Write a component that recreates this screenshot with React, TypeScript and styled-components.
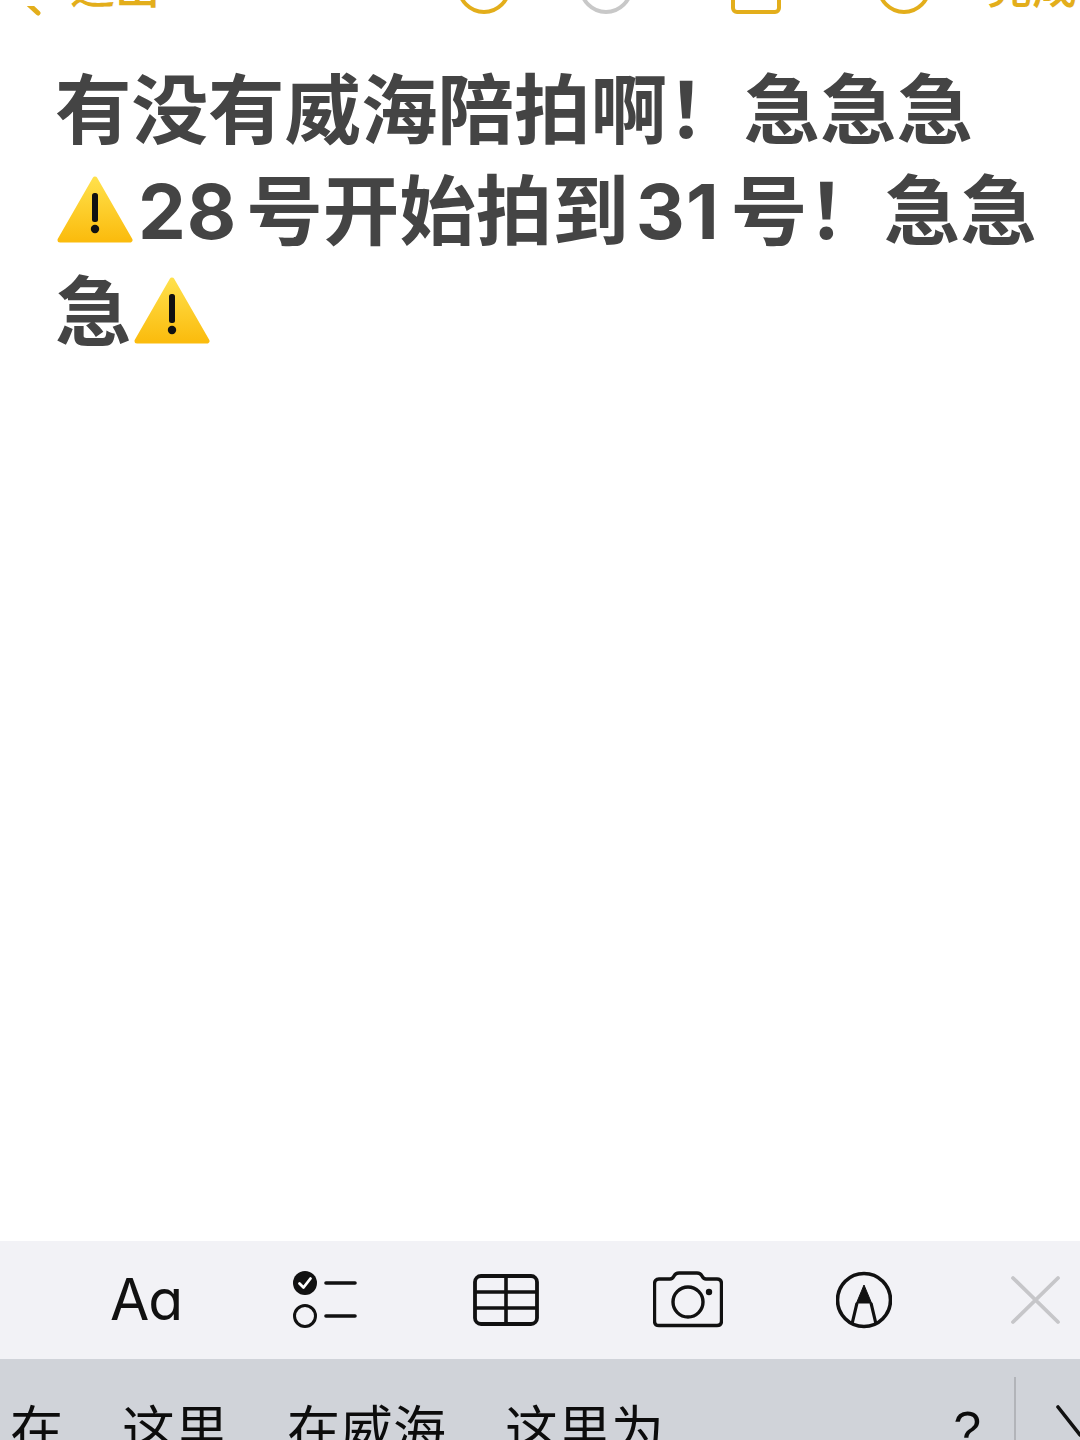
import React from 'react'
import styled, { createGlobalStyle } from 'styled-components'

const GlobalStyle = createGlobalStyle`
  html, body {
    margin: 0;
    padding: 0;
    background: #fff;
  }
`

const Screen = styled.div`
  width: 1080px;
  height: 1440px;
  display: flex;
  flex-direction: column;
  overflow: hidden;
  background: #fff;
  font-family: "Noto Sans CJK SC", "Noto Sans", sans-serif;
`

// the nav bar is cut off by the top of the screen, only its bottom edge shows
const NavBar = styled.div`
  height: 16px;
  flex: none;
  display: flex;
  align-items: flex-end;
  overflow: hidden;
  color: #e3ae1b;
`

const NavText = styled.span<{ $left: number; $drop: number }>`
  flex: none;
  margin-left: ${p => p.$left}px;
  margin-bottom: ${p => p.$drop}px;
  font-size: 45px;
  font-weight: 500;
  line-height: 45px;
  white-space: nowrap;
`

const NavSvg = styled.svg<{ $left: number }>`
  flex: none;
  display: block;
  margin-left: ${p => p.$left}px;
`

const NavCircle = styled.div<{ $left: number; $muted?: boolean }>`
  flex: none;
  box-sizing: border-box;
  width: 54px;
  height: 54px;
  margin-left: ${p => p.$left}px;
  margin-bottom: 2px;
  border: 4px solid ${p => (p.$muted ? '#c8c8c8' : '#e3ae1b')};
  border-radius: 50%;
`

const NavSquare = styled.div<{ $left: number }>`
  flex: none;
  box-sizing: border-box;
  width: 50px;
  height: 50px;
  margin-left: ${p => p.$left}px;
  margin-bottom: 2px;
  border: 4px solid #e3ae1b;
  border-radius: 6px;
`

const Note = styled.div`
  flex: 1;
  min-height: 0;
  padding: 38px 40px 0 55px;
  color: #444444;
  font-size: 76.5px;
  font-weight: 700;
  line-height: 101px;
`

const Digits = styled.span<{ $tail: number }>`
  margin: 0 ${p => p.$tail}px 0 7px;
  font-family: Inter, "Noto Sans", sans-serif;
  font-size: 76px;
  line-height: 1;
  letter-spacing: 1px;
`

const WarningSvg = styled.svg`
  display: inline-block;
  width: 76px;
  height: 68px;
  margin: -20px -2px -20px 2px;
  vertical-align: 15px;
`

const Toolbar = styled.div`
  height: 118px;
  flex: none;
  box-sizing: border-box;
  padding-left: 112px;
  display: flex;
  align-items: center;
  gap: 113px;
  background: #f2f2f6;
`

const FormatLabel = styled.span`
  width: 68px;
  flex: none;
  margin-left: -2px;
  margin-right: 2px;
  color: #111;
  font-family: Inter, sans-serif;
  font-feature-settings: 'cv11';
  font-size: 57px;
  font-weight: 400;
  line-height: 60px;
  letter-spacing: -1px;
  white-space: nowrap;
`

const ToolSvg = styled.svg`
  flex: none;
  display: block;
  height: 60px;
`

const Suggestions = styled.div`
  height: 81px;
  flex: none;
  box-sizing: border-box;
  padding-left: 10px;
  display: flex;
  align-items: flex-start;
  overflow: hidden;
  background: #d0d3d9;
  color: #0c0c0c;
`

const Candidate = styled.span`
  flex: none;
  margin-right: 59px;
  margin-top: 33px;
  font-size: 53px;
  font-weight: 400;
  line-height: 70px;
  white-space: nowrap;
`

const Question = styled.span`
  flex: none;
  margin-left: auto;
  margin-top: 36px;
  font-family: "Liberation Sans", sans-serif;
  font-size: 50px;
  line-height: 70px;
`

const Divider = styled.div`
  flex: none;
  width: 2px;
  height: 70px;
  margin: 18px 0 0 33px;
  background: #b2b4b9;
`

const Chevron = styled.svg`
  flex: none;
  display: block;
  margin: 46px 0 0 40px;
`

const Warning = () => (
  <WarningSvg viewBox="0 0 76 68">
    <defs>
      <linearGradient id="warnFill" x1="0" y1="0" x2="0" y2="1">
        <stop offset="0" stopColor="#ffe04a" />
        <stop offset="1" stopColor="#fbbc0e" />
      </linearGradient>
    </defs>
    <path
      d="M38 3 L73 64 L3 64 Z"
      fill="url(#warnFill)"
      stroke="url(#warnFill)"
      strokeWidth="5"
      strokeLinejoin="round"
    />
    <rect x="35" y="17" width="6" height="29" rx="2.5" fill="#111" />
    <circle cx="38" cy="53" r="4.2" fill="#111" />
  </WarningSvg>
)

const App = () => (
  <Screen>
    <GlobalStyle />
    <NavBar>
      <NavSvg $left={18} width="28" height="10" viewBox="0 0 28 10">
        <path d="M6 -6 L20 7" fill="none" stroke="#e3ae1b" strokeWidth="5" strokeLinecap="round" />
      </NavSvg>
      <NavText $left={24} $drop={9}>退出</NavText>
      <NavCircle $left={297} />
      <NavCircle $left={68} $muted />
      <NavSquare $left={98} />
      <NavCircle $left={96} />
      <NavText $left={56} $drop={9}>完成</NavText>
    </NavBar>

    <Note>
      有没有威海陪拍啊！急急急
      <Warning />
      <Digits $tail={9}>28</Digits>号开始拍到<Digits $tail={11}>31</Digits>号！急急急
      <Warning />
    </Note>

    <Toolbar>
      <FormatLabel>Aa</FormatLabel>
      <ToolSvg width="67" viewBox="0 0 67 60">
        <circle cx="12" cy="13" r="12" fill="#111" />
        <path d="M6.5 13.5 L10.5 17.5 L17.5 8.5" fill="none" stroke="#fff" strokeWidth="2.8" strokeLinecap="round" strokeLinejoin="round" />
        <circle cx="12" cy="46" r="10.5" fill="none" stroke="#111" strokeWidth="3" />
        <path d="M33 13 H62 M33 46 H62" stroke="#111" strokeWidth="3.6" strokeLinecap="round" />
      </ToolSvg>
      <ToolSvg width="67" viewBox="0 0 67 60">
        <rect x="2" y="6" width="62" height="48" rx="6" fill="none" stroke="#111" strokeWidth="3.8" />
        <path d="M33 6 V54 M2 22 H64 M2 38 H64" stroke="#111" strokeWidth="3.6" />
      </ToolSvg>
      <ToolSvg width="70" viewBox="0 0 70 60">
        <path
          d="M6 9 H17 C19 9 20 8 21 6 C22 4 23 3 26 3 H44 C47 3 48 4 49 6 C50 8 51 9 53 9 H64 C67 9 68.5 11 68.5 14 V51 C68.5 54 67 55.5 64 55.5 H6 C3 55.5 1.5 54 1.5 51 V14 C1.5 11 3 9 6 9 Z"
          fill="none"
          stroke="#111"
          strokeWidth="3.4"
        />
        <circle cx="35" cy="32" r="15" fill="none" stroke="#111" strokeWidth="3.4" />
        <circle cx="56" cy="22" r="3.2" fill="#111" />
      </ToolSvg>
      <ToolSvg width="56" viewBox="0 0 56 60">
        <circle cx="28" cy="30" r="26.5" fill="none" stroke="#111" strokeWidth="3.6" />
        <path d="M28 15 L20.5 33 H35.5 Z" fill="#111" stroke="#111" strokeWidth="1" strokeLinejoin="round" />
        <path d="M21 33 L16 54 M35 33 L40 54" stroke="#111" strokeWidth="3.2" />
      </ToolSvg>
      <ToolSvg width="60" viewBox="0 0 60 60">
        <path d="M8 8 L53 52 M53 8 L8 52" stroke="#c6c6c9" strokeWidth="3.8" strokeLinecap="round" />
      </ToolSvg>
    </Toolbar>

    <Suggestions>
      <Candidate>在</Candidate>
      <Candidate>这里</Candidate>
      <Candidate>在威海</Candidate>
      <Candidate>这里为</Candidate>
      <Question>?</Question>
      <Divider />
      <Chevron width="24" height="34" viewBox="0 0 24 34">
        <path d="M2 2 L24 30" fill="none" stroke="#111" strokeWidth="3.6" strokeLinecap="round" />
      </Chevron>
    </Suggestions>
  </Screen>
)

export default App
